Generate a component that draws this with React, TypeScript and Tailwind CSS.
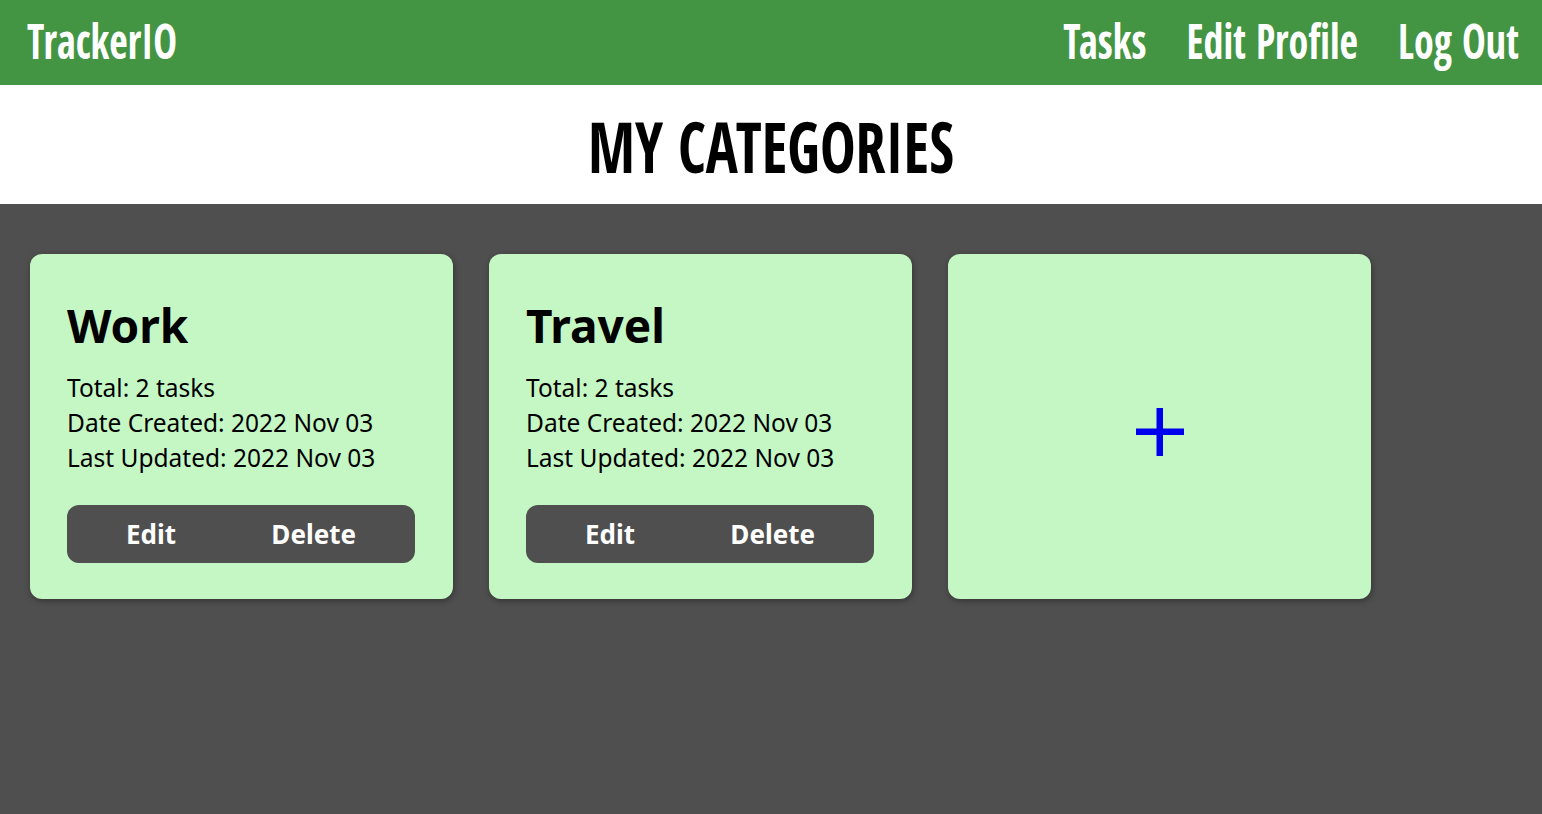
import React from "react";

interface Category {
  id: number;
  name: string;
  total: number;
  created: string;
  updated: string;
}

const categories: Category[] = [
  { id: 1, name: "Work", total: 2, created: "2022 Nov 03", updated: "2022 Nov 03" },
  { id: 2, name: "Travel", total: 2, created: "2022 Nov 03", updated: "2022 Nov 03" },
];

function CategoryCard({ category }: { category: Category }) {
  return (
    <div className="w-[423px] h-[345px] rounded-xl bg-[#c5f7c5] shadow-[1px_2px_6px_rgba(0,0,0,0.35)] px-[37px] pt-[41px] flex flex-col">
      <h2 className="text-[46px] font-bold leading-[60px] text-black">{category.name}</h2>
      <div className="mt-[15px] text-[24.5px] leading-[35px] text-black">
        <p>Total: {category.total} tasks</p>
        <p>Date Created: {category.created}</p>
        <p>Last Updated: {category.updated}</p>
      </div>
      <div className="mt-[30px] h-[58px] w-[348px] rounded-xl bg-[#4f4f4f] flex items-center justify-between px-[59px] text-white text-[26px] font-bold">
        <button>Edit</button>
        <button>Delete</button>
      </div>
    </div>
  );
}

export default function App() {
  return (
    <div className="min-h-screen bg-[#4f4f4f] flex flex-col font-['Noto_Sans','Open_Sans',sans-serif]">
      {/* Top nav */}
      <nav className="h-[85px] bg-[#439443] flex items-center justify-between pl-[27px] pr-[23px] text-white font-['Open_Sans_Condensed','Roboto_Condensed',sans-serif] font-bold text-[40px] leading-none">
        <span className="scale-y-[1.22] mb-[3px]">TrackerIO</span>
        <div className="flex items-center gap-[40px] mb-[3px]">
          <a className="scale-y-[1.22] cursor-pointer">Tasks</a>
          <a className="scale-y-[1.22] cursor-pointer">Edit Profile</a>
          <a className="scale-y-[1.22] cursor-pointer">Log Out</a>
        </div>
      </nav>

      {/* Page title */}
      <div className="h-[119px] bg-white flex items-center justify-center">
        <h1 className="mt-[3px] text-[60px] leading-none font-bold text-black scale-y-[1.17] font-['Open_Sans_Condensed','Roboto_Condensed',sans-serif]">
          MY CATEGORIES
        </h1>
      </div>

      {/* Cards */}
      <div className="flex gap-[36px] px-[30px] pt-[50px]">
        {categories.map((c) => (
          <CategoryCard key={c.id} category={c} />
        ))}
        <button className="w-[423px] h-[345px] rounded-xl bg-[#c5f7c5] shadow-[1px_2px_6px_rgba(0,0,0,0.35)] flex items-center justify-center">
          <svg className="mt-[11px]" width="48" height="48" viewBox="0 0 48 48">
            <rect x="0" y="20.5" width="48" height="6.5" fill="#0000ee" />
            <rect x="20.5" y="0" width="6.5" height="48" fill="#0000ee" />
          </svg>
        </button>
      </div>
    </div>
  );
}
